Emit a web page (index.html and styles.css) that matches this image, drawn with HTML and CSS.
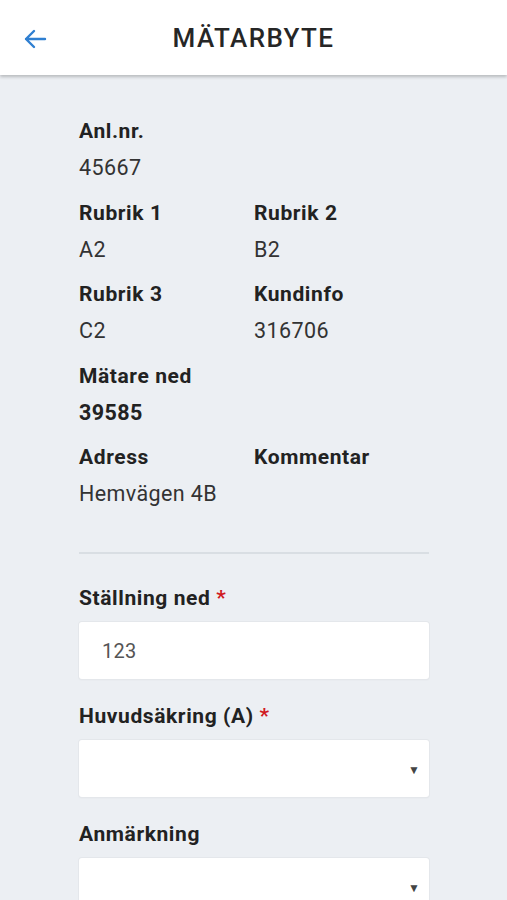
FILE: index.html
```html
<!DOCTYPE html>
<html lang="sv">
<head>
  <meta charset="UTF-8" />
  <meta name="viewport" content="width=device-width, initial-scale=1.0" />
  <title>Mätarbyte</title>
  <link rel="stylesheet" href="styles.css">
</head>
<body>
  <div class="app-header">
    <div class="back-btn">
      <svg width="24" height="20" viewBox="0 0 24 20"><path d="M22 10H3M11 2L3 10l8 8" fill="none" stroke="#2f7fd1" stroke-width="2.4" stroke-linecap="round" stroke-linejoin="round"/></svg>
    </div>
    <div class="header-title">MÄTARBYTE</div>
  </div>

  <div class="content">
    <div class="info-grid">
      <div class="field full">
        <div class="label">Anl.nr.</div>
        <div class="value">45667</div>
      </div>
      <div class="field">
        <div class="label">Rubrik 1</div>
        <div class="value">A2</div>
      </div>
      <div class="field">
        <div class="label">Rubrik 2</div>
        <div class="value">B2</div>
      </div>
      <div class="field">
        <div class="label">Rubrik 3</div>
        <div class="value">C2</div>
      </div>
      <div class="field">
        <div class="label">Kundinfo</div>
        <div class="value">316706</div>
      </div>
      <div class="field full">
        <div class="label">Mätare ned</div>
        <div class="value bold">39585</div>
      </div>
      <div class="field">
        <div class="label">Adress</div>
        <div class="value">Hemvägen 4B</div>
      </div>
      <div class="field">
        <div class="label">Kommentar</div>
        <div class="value"></div>
      </div>
    </div>

    <div class="divider"></div>

    <div class="form-group">
      <div class="label">Ställning ned <span class="req">*</span></div>
      <div class="text-input">123</div>
    </div>
    <div class="form-group">
      <div class="label">Huvudsäkring (A) <span class="req">*</span></div>
      <div class="select-input"><span class="caret">▼</span></div>
    </div>
    <div class="form-group">
      <div class="label">Anmärkning</div>
      <div class="select-input"><span class="caret">▼</span></div>
    </div>
  </div>
</body>
</html>
```

FILE: styles.css
```css
* {
  margin: 0;
  padding: 0;
  box-sizing: border-box;
}

body {
  font-family: Roboto, 'Noto Sans', sans-serif;
  background: #eceff3;
  color: #222;
  overflow: hidden;
}

.app-header {
  height: 75px;
  background: #ffffff;
  display: flex;
  align-items: center;
  justify-content: center;
  position: relative;
  box-shadow: 0 2px 3px rgba(0,0,0,0.22);
}

.back-btn {
  position: absolute;
  left: 23px;
  top: 29px;
  display: flex;
}

.header-title {
  font-size: 26px;
  font-weight: 500;
  color: #262626;
  letter-spacing: 1.4px;
}

.content {
  padding: 43px 0 0 79px;
  width: 429px;
}

.info-grid {
  display: grid;
  grid-template-columns: 175px 175px;
  row-gap: 18.5px;
}

.field.full {
  grid-column: span 2;
}

.label {
  font-size: 21px;
  font-weight: bold;
  line-height: 26px;
  letter-spacing: 0.6px;
  color: #222;
}

.value {
  font-size: 21.5px;
  line-height: 26px;
  letter-spacing: 0.4px;
  margin-top: 11px;
  color: #333;
  min-height: 26px;
}

.value.bold {
  font-weight: bold;
  color: #222;
}

.divider {
  height: 2px;
  background: #d9dee3;
  margin: 45px 0 31px;
}

.form-group {
  margin-bottom: 24px;
}

.req {
  color: #d0191f;
}

.text-input,
.select-input {
  margin-top: 11px;
  height: 57px;
  background: #ffffff;
  border-radius: 3px;
  box-shadow: 0 0 0 1px #e4e7eb, 0 1px 2px rgba(0,0,0,0.06);
  display: flex;
  align-items: center;
}

.text-input {
  padding-left: 23px;
  font-size: 20px;
  letter-spacing: 0.3px;
  color: #555;
}

.select-input {
  justify-content: flex-end;
  padding-right: 9px;
}

.caret {
  font-size: 12px;
  color: #444;
  margin-top: 3px;
}
```
